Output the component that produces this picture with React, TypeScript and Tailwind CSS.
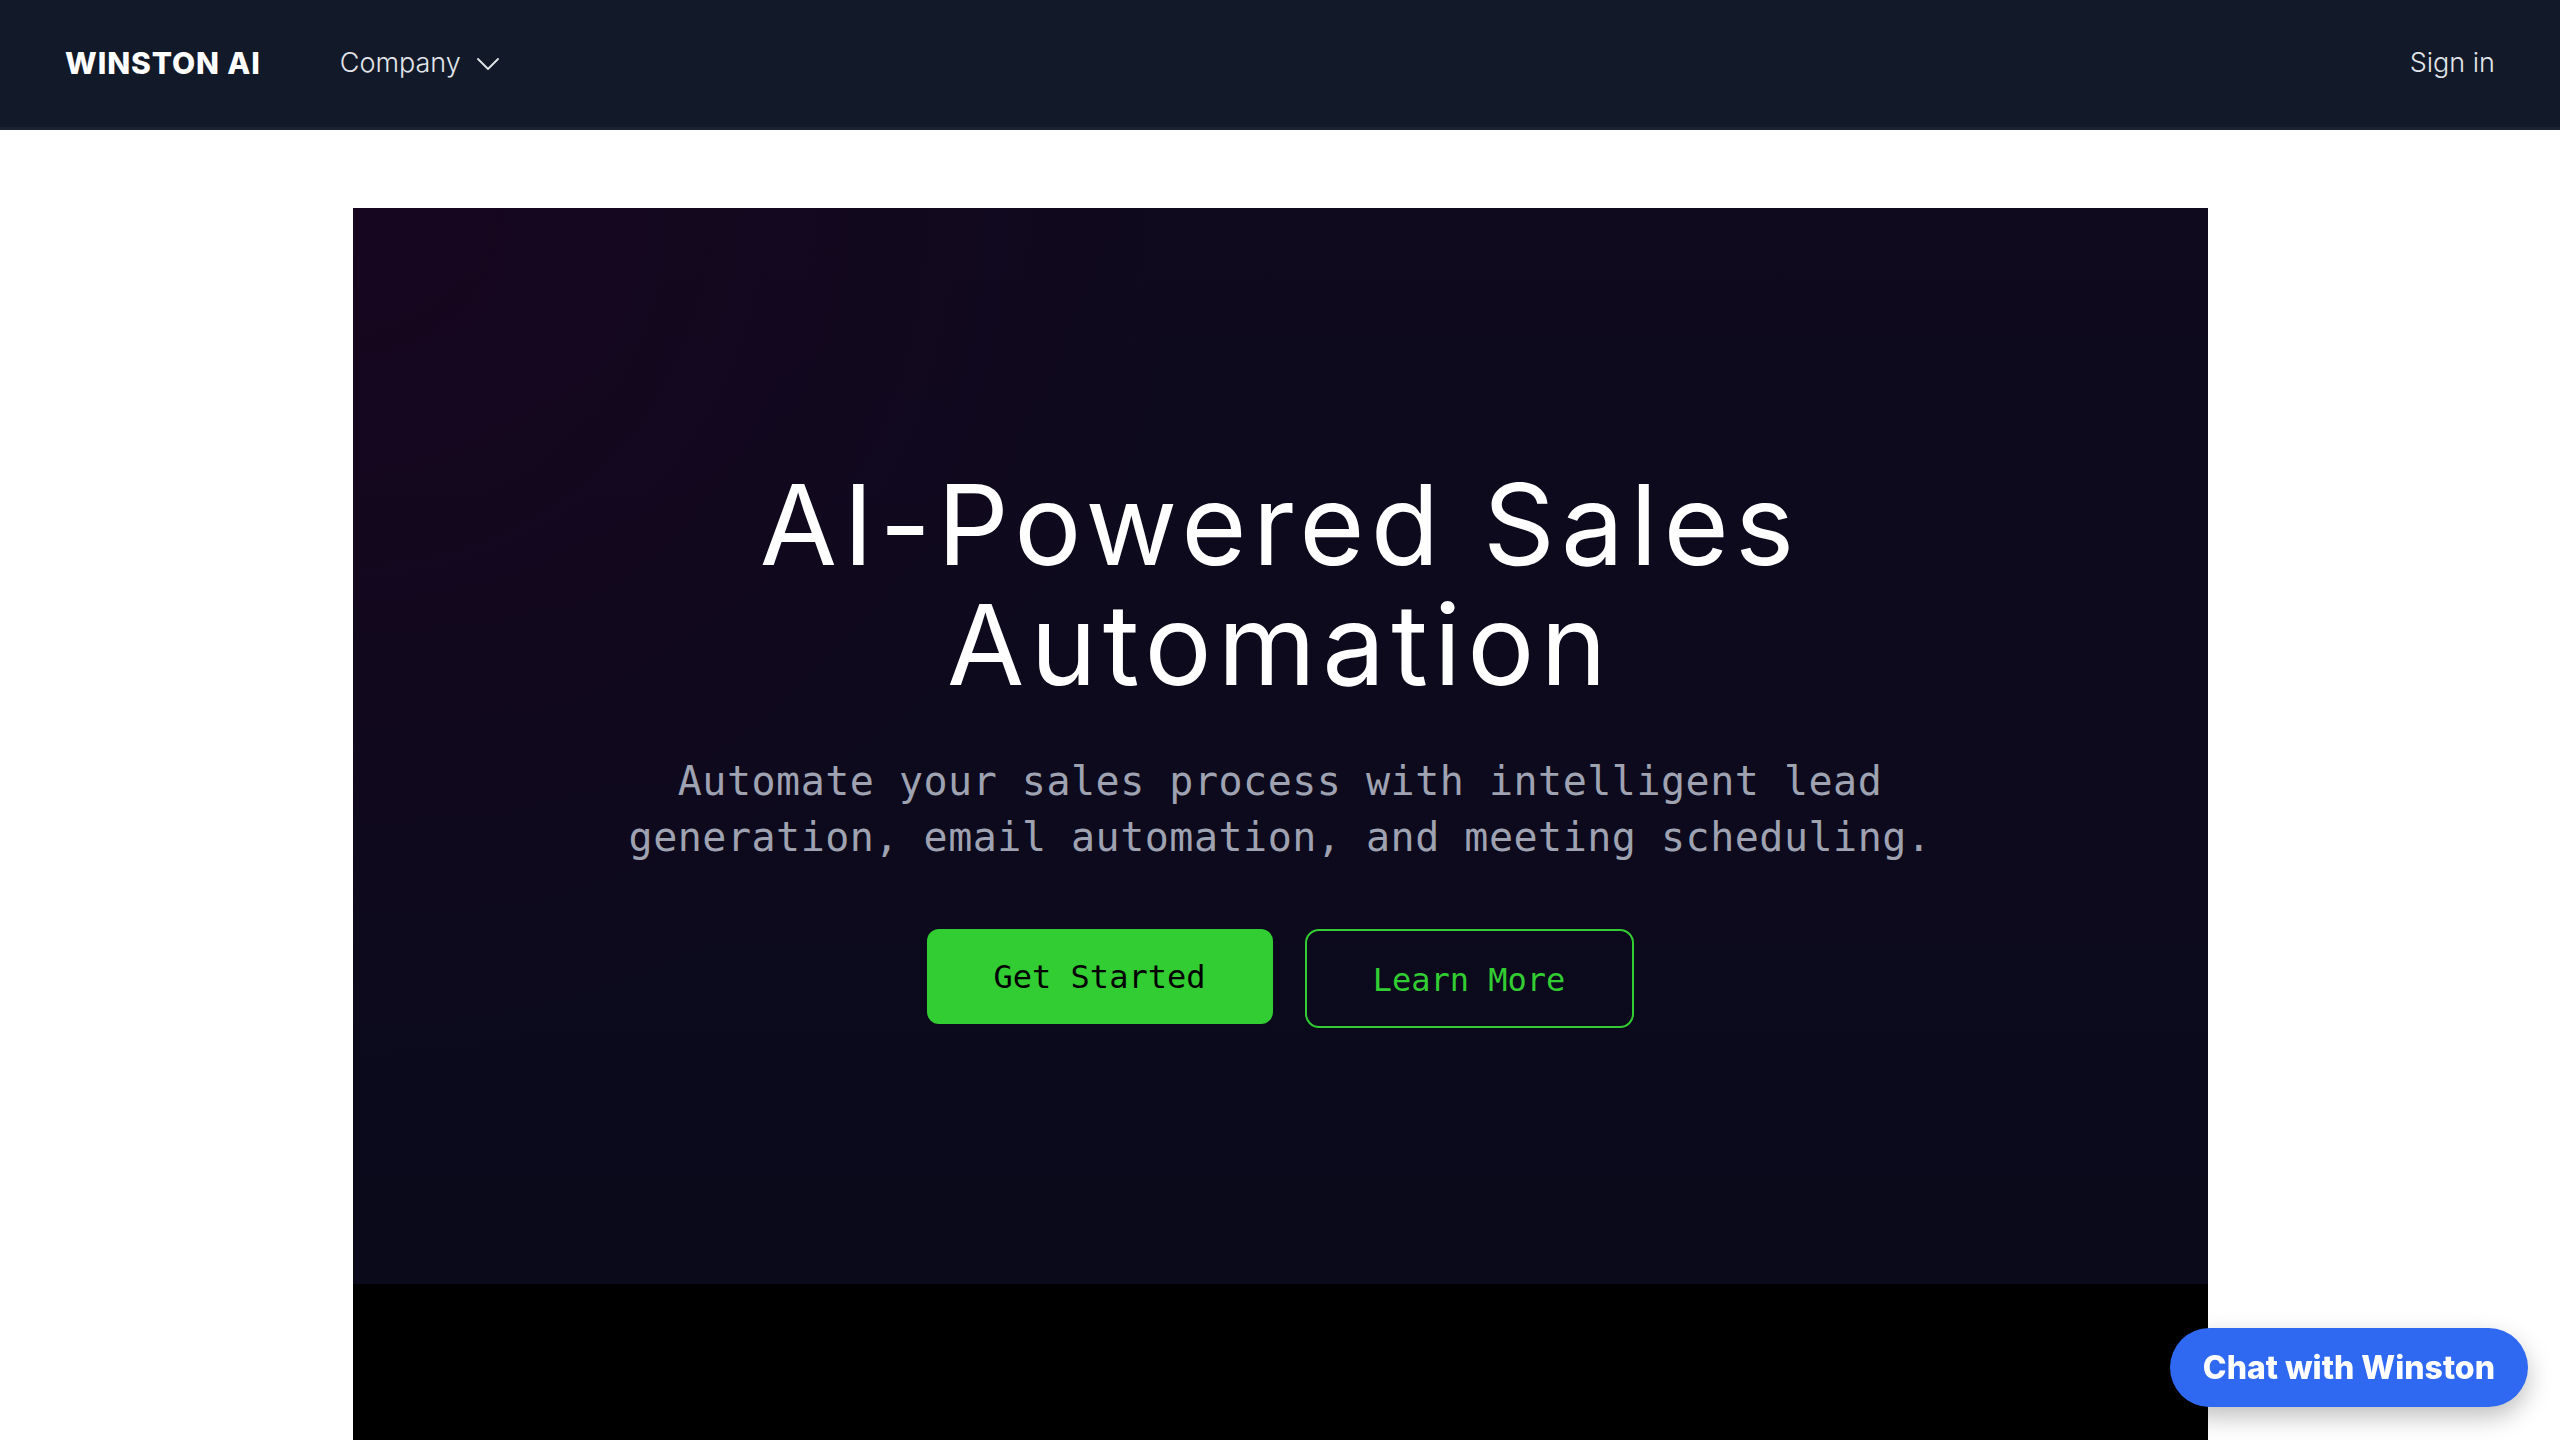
import React from "react";

const mono = "font-['DejaVu_Sans_Mono','Liberation_Mono',monospace]";

function Chevron() {
  return (
    <svg width="22" height="12" viewBox="0 0 22 12" fill="none">
      <path d="M1 1 L11 11 L21 1" stroke="currentColor" strokeWidth="1.8" strokeLinecap="round" strokeLinejoin="round" />
    </svg>
  );
}

export default function App() {
  return (
    <div className="min-h-screen bg-white font-['Inter','Noto_Sans',sans-serif]">
      <header className="flex h-[130px] items-center justify-between border-b-[3px] border-[#1b2232] bg-[#121a2a] px-[65px]">
        <div className="flex items-center gap-[79px]">
          <span className="text-[30px] font-extrabold tracking-[0.03em] text-white">WINSTON AI</span>
          <button className="flex items-center gap-[16px] text-[27px] font-light text-[#e2e5ea]">
            Company
            <Chevron />
          </button>
        </div>
        <a className="text-[27px] font-light text-[#e2e5ea]">Sign in</a>
      </header>

      <main className="pt-[78px]">
        <section className="mx-auto flex h-[1076px] w-[1855px] flex-col items-center justify-center bg-[#0d0a1d] bg-[radial-gradient(circle_at_0%_0%,#17061f_0%,transparent_40%),linear-gradient(to_bottom,#0f0a1e,#0a0a1b)]">
          <h1 className="text-center text-[112px] font-normal leading-[120px] tracking-[0.055em] text-white">
            AI-Powered Sales
            <br />
            Automation
          </h1>
          <p className={`${mono} mt-[49px] text-center text-[40px] leading-[56px] tracking-[0.5px] text-[#9ea2b1]`}>
            Automate your sales process with intelligent lead
            <br />
            generation, email automation, and meeting scheduling.
          </p>
          <div className="mt-[64px] flex items-start gap-[32px]">
            <button className={`${mono} h-[95px] w-[346px] rounded-[12px] bg-[#32cd32] text-[32px] text-black`}>
              Get Started
            </button>
            <button className={`${mono} h-[99px] w-[329px] rounded-[14px] border-2 border-[#32cd32] pt-[2px] text-[32px] text-[#32cd32]`}>
              Learn More
            </button>
          </div>
        </section>
        <section className="mx-auto h-[480px] w-[1855px] bg-black" />
      </main>

      <button className="fixed bottom-[33px] right-[32px] flex h-[79px] items-center rounded-full bg-[#2f68f1] px-[33px] text-[32px] font-extrabold text-white shadow-[0_10px_25px_rgba(0,0,0,0.25)]">
        Chat with Winston
      </button>
    </div>
  );
}
